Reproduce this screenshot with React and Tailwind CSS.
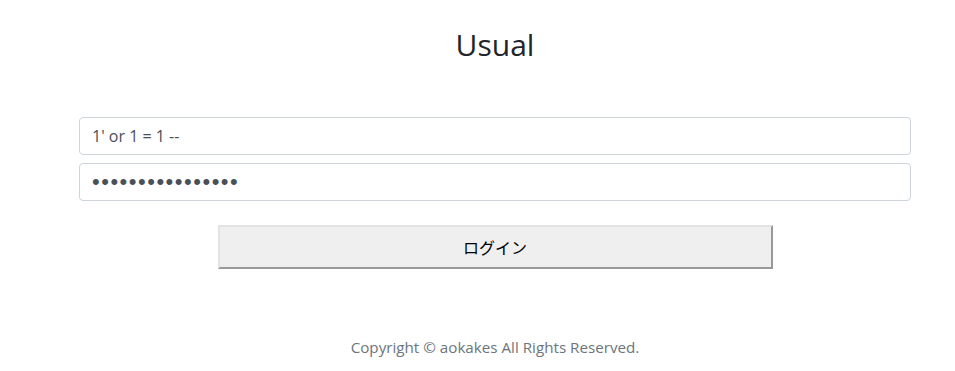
export default function App() {
  const font = { fontFamily: '"Open Sans", "Noto Sans", sans-serif' };
  return (
    <div className="min-h-[371px] bg-white pl-[79px] pr-[44px] pt-[27px]" style={font}>
      <h1 className="text-center text-[30px] leading-[36px] font-normal text-[#212529]">Usual</h1>
      <form className="mt-[54px] flex flex-col gap-[8px]" onSubmit={(e) => e.preventDefault()}>
        <input
          type="text"
          defaultValue="1' or 1 = 1 --"
          className="h-[38px] w-full rounded-[4px] border border-[#ced4da] bg-white px-[12px] text-[16px] text-[#495057] outline-none"
          style={font}
        />
        <input
          type="password"
          defaultValue="aaaaaaaaaaaaaaaa"
          className="h-[38px] w-full rounded-[4px] border border-[#ced4da] bg-white px-[12px] text-[22px] tracking-[1.5px] text-[#495057] outline-none"
          style={{ fontFamily: '"Liberation Sans", sans-serif' }}
        />
        <div className="mt-[16px] flex justify-center">
          <button
            type="submit"
            className="h-[44px] w-[555px] border-2 border-t-[#e3e3e3] border-l-[#e3e3e3] border-b-[#999999] border-r-[#999999] bg-[#efefef] text-[16px] text-black"
            style={{ fontFamily: '"Noto Sans CJK JP", sans-serif' }}
          >
            ログイン
          </button>
        </div>
      </form>
      <footer className="mt-[66px] text-center text-[15.2px] leading-[24px] text-[#6c757d]">
        Copyright © aokakes All Rights Reserved.
      </footer>
    </div>
  );
}
